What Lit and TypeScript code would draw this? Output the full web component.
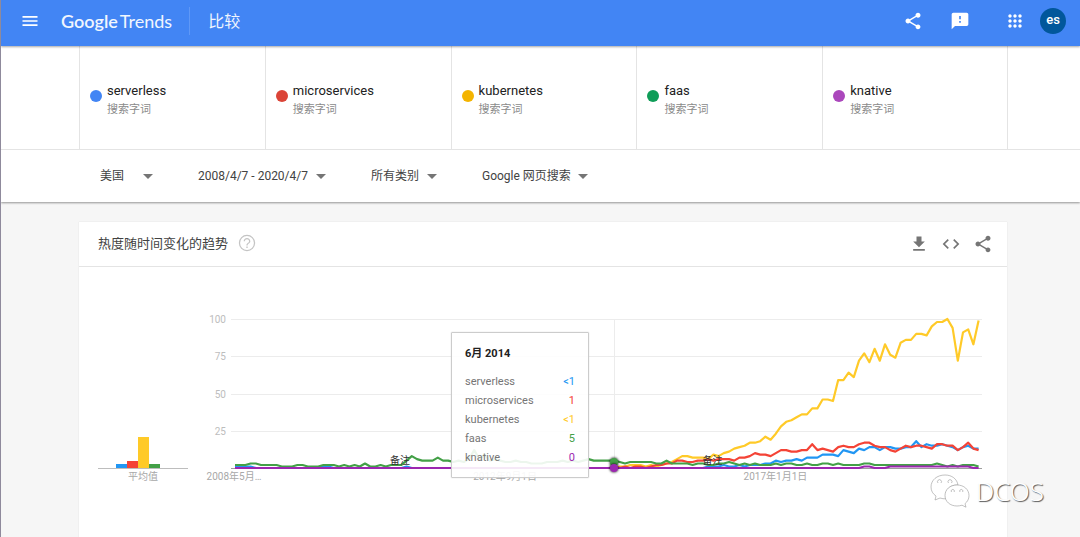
import { LitElement, html, svg, css } from "lit";
import { customElement, property } from "lit/decorators.js";

type Series = { id: string; color: string; values: number[] };

const parse = (text: string): number[] => text.trim().split(/\s+/).map(Number);
const zeros = (n: number): string => "0 ".repeat(n);

// Monthly interest from 2008 to 2020, one value per month.
const SERIES: Series[] = [
  {
    id: "kubernetes",
    color: "#ffca28",
    values: parse(
      zeros(74) +
        "1 1 2 2 2 1 2 1 2 3 4 6 8 8 7 7 7 6 9 8 10 11 13 14 15 17 17 18 21 19 23 28 31 32 34 36 36 40 40 46 46 45 " +
        "59 59 64 61 72 77 71 80 72 83 76 74 84 86 86 90 90 89 95 98 98 100 94 72 91 93 83 99",
    ),
  },
  {
    id: "serverless",
    color: "#2196f3",
    values: parse(
      "1 1 1 1 " + zeros(12) + "0 1 1 " + zeros(14) + "1 " + zeros(57) +
        "1 1 1 2 1 1 2 1 2 2 2 3 3 5 4 5 5 6 5 7 7 7 9 9 9 8 " +
        "12 11 10 13 12 14 14 12 14 14 13 13 14 14 18 14 16 15 15 16 15 14 12 14 15 13 13",
    ),
  },
  {
    id: "microservices",
    color: "#f44336",
    values: parse(
      zeros(73) +
        "1 0 1 0 1 1 0 1 2 2 3 3 5 5 4 4 5 5 6 5 6 6 6 5 7 7 8 10 9 9 8 10 12 12 11 11 12 12 16 12 13 12 11 14 " +
        "15 14 14 16 17 17 15 14 14 12 11 13 15 14 15 15 14 13 16 16 15 15 12 14 17 13 12",
    ),
  },
  {
    id: "faas",
    color: "#43a047",
    values: parse(
      "2 2 2 3 3 2 2 2 2 1 1 1 2 2 1 1 1 2 2 2 1 2 1 2 1 3 1 1 2 1 2 2 2 5 8 6 5 5 5 7 5 5 4 " +
        "5 4 6 12 6 9 5 6 5 4 4 5 4 4 3 3 3 4 4 4 5 4 5 4 5 6 5 5 5 5 5 4 3 4 4 4 4 4 3 3 5 3 3 3 3 2 3 3 2 2 3 " +
        "3 4 3 2 3 2 3 2 2 2 3 2 3 3 2 2 3 2 2 3 3 2 3 2 2 2 2 3 3 2 2 2 2 2 2 2 2 2 2 2 2 3 2 1 2 1 2 2 2 1",
    ),
  },
  {
    id: "knative",
    color: "#9c27b0",
    values: parse(zeros(121) + "1 1 0 0 0 1 1 1 1 1 1 1 1 1 1 1 1 1 1 1 1 0 0"),
  },
];

const TERMS = [
  { name: "serverless", color: "#4285f4" },
  { name: "microservices", color: "#db4437" },
  { name: "kubernetes", color: "#f4b400" },
  { name: "faas", color: "#0f9d58" },
  { name: "knative", color: "#ab47bc" },
];

const AVERAGES = [
  { value: 3, color: "#2196f3" },
  { value: 4.5, color: "#f44336" },
  { value: 21, color: "#ffca28" },
  { value: 3, color: "#43a047" },
  { value: 0, color: "#9c27b0" },
];

const READINGS = [
  { name: "serverless", value: "<1", color: "#2196f3" },
  { name: "microservices", value: "1", color: "#f44336" },
  { name: "kubernetes", value: "<1", color: "#ffca28" },
  { name: "faas", value: "5", color: "#43a047" },
  { name: "knative", value: "0", color: "#9c27b0" },
];

const ICONS: Record<string, string> = {
  menu: "M3 18h18v-2H3v2zm0-5h18v-2H3v2zm0-7v2h18V6H3z",
  share:
    "M18 16.08c-.76 0-1.44.3-1.96.77L8.91 12.7c.05-.23.09-.46.09-.7s-.04-.47-.09-.7l7.05-4.11c.54.5 1.25.81 2.04.81 1.66 0 3-1.34 3-3s-1.34-3-3-3-3 1.34-3 3c0 .24.04.47.09.7L8.04 9.81C7.5 9.31 6.79 9 6 9c-1.66 0-3 1.34-3 3s1.34 3 3 3c.79 0 1.5-.31 2.04-.81l7.12 4.16c-.05.21-.08.43-.08.65 0 1.61 1.31 2.92 2.92 2.92 1.61 0 2.92-1.31 2.92-2.92s-1.31-2.92-2.92-2.92z",
  feedback:
    "M20 2H4c-1.1 0-1.99.9-1.99 2L2 22l4-4h14c1.1 0 2-.9 2-2V4c0-1.1-.9-2-2-2zm-7 12h-2v-2h2v2zm0-4h-2V6h2v4z",
  apps:
    "M6 8c1.1 0 2-.9 2-2s-.9-2-2-2-2 .9-2 2 .9 2 2 2zm6 12c1.1 0 2-.9 2-2s-.9-2-2-2-2 .9-2 2 .9 2 2 2zm-6 0c1.1 0 2-.9 2-2s-.9-2-2-2-2 .9-2 2 .9 2 2 2zm0-6c1.1 0 2-.9 2-2s-.9-2-2-2-2 .9-2 2 .9 2 2 2zm6 0c1.1 0 2-.9 2-2s-.9-2-2-2-2 .9-2 2 .9 2 2 2zm4-8c0 1.1.9 2 2 2s2-.9 2-2-.9-2-2-2-2 .9-2 2zm-4 2c1.1 0 2-.9 2-2s-.9-2-2-2-2 .9-2 2 .9 2 2 2zm6 6c1.1 0 2-.9 2-2s-.9-2-2-2-2 .9-2 2 .9 2 2 2zm0 6c1.1 0 2-.9 2-2s-.9-2-2-2-2 .9-2 2 .9 2 2 2z",
  help:
    "M11.200 18h1.600v-1.800h-1.600V18zM12 2.200a9.800 9.800 0 1 0 0 19.600 9.800 9.800 0 0 0 0-19.600zm0 18.100a8.300 8.300 0 1 1 0-16.600 8.300 8.300 0 0 1 0 16.600zM12 6c-2.210 0-4 1.790-4 4h1.500c0-1.400 1.100-2.500 2.500-2.500s2.500 1.100 2.500 2.500c0 2-3.200 2.100-3.200 5h1.500c0-2.200 3.200-2.500 3.200-5 0-2.210-1.790-4-4-4z",
  download: "M19 9h-4V3H9v6H5l7 7 7-7zM5 18v2h14v-2H5z",
  code:
    "M9.4 16.6L4.800 12l4.600-4.600L8 6l-6 6 6 6 1.400-1.400zm5.200 0l4.600-4.600-4.600-4.600L16 6l6 6-6 6-1.400-1.400z",
};

@customElement("trends-icon")
class TrendsIcon extends LitElement {
  @property() name = "menu";

  static styles = css`
    :host {
      display: block;
      width: 20px;
      height: 20px;
    }
    .glyph {
      display: block;
      width: 100%;
      height: 100%;
      fill: currentColor;
    }
  `;

  render() {
    return html`<svg class="glyph" viewBox="0 0 24 24" aria-hidden="true"><path d=${ICONS[this.name]}></path></svg>`;
  }
}

@customElement("trends-header")
class TrendsHeader extends LitElement {
  static styles = css`
    :host {
      display: flex;
      align-items: center;
      box-sizing: border-box;
      height: 46px;
      padding: 0 14px 4px 19px;
      background: #4285f4;
      color: #fff;
      box-shadow: 0 1px 2px rgba(0, 0, 0, 0.35);
      position: relative;
    }
    .icon {
      border: 0;
      padding: 0;
      background: none;
      color: inherit;
    }
    .logo {
      display: flex;
      gap: 2px;
      margin-left: 21px;
      color: #f1f6fe;
      text-decoration: none;
      font: 18px/24px Lato, sans-serif;
    }
    .brand {
      font-weight: 600;
    }
    .title {
      margin: 0 auto 0 17px;
      padding: 2px 0 0 18px;
      border-left: 1px solid #5f98f7;
      color: #f1f6fe;
      font-size: 16px;
      font-weight: 400;
      line-height: 26px;
    }
    .actions {
      display: flex;
      align-items: center;
    }
    .feedback {
      margin-left: 27px;
    }
    .apps {
      margin-left: 35px;
    }
    .avatar {
      width: 26px;
      height: 26px;
      margin-left: 15px;
      padding: 0 0 2px;
      border: 0;
      border-radius: 50%;
      background: #01579b;
      color: #fff;
      font: 500 13px/24px Roboto, sans-serif;
    }
  `;

  render() {
    return html`
      <button class="icon" aria-label="菜单"><trends-icon name="menu"></trends-icon></button>
      <a class="logo" href="#"><span class="brand">Google</span><span>Trends</span></a>
      <h1 class="title">比较</h1>
      <div class="actions">
        <button class="icon" aria-label="分享"><trends-icon name="share"></trends-icon></button>
        <button class="icon feedback" aria-label="反馈"><trends-icon name="feedback"></trends-icon></button>
        <button class="icon apps" aria-label="应用"><trends-icon name="apps"></trends-icon></button>
        <button class="avatar">es</button>
      </div>
    `;
  }
}

@customElement("trends-query")
class TrendsQuery extends LitElement {
  static styles = css`
    :host {
      display: block;
      background: #fff;
      box-shadow: 0 1px 2px rgba(0, 0, 0, 0.4);
    }
    .terms {
      display: grid;
      grid-template-columns: repeat(5, 1fr);
      padding: 0 72px 0 78px;
      border-bottom: 1px solid #e4e4e4;
    }
    .term {
      display: flex;
      align-items: center;
      gap: 5px;
      height: 103px;
      box-sizing: border-box;
      padding: 0 10px 4px;
      border-left: 1px solid #e4e4e4;
    }
    .term:last-child {
      border-right: 1px solid #e4e4e4;
    }
    .dot {
      width: 12px;
      height: 12px;
      border-radius: 50%;
    }
    .text {
      padding-top: 8px;
      line-height: 19px;
    }
    .name {
      font-size: 13px;
      color: #212121;
    }
    .kind {
      font-size: 11px;
      color: #8a8a8a;
    }
    .filters {
      display: flex;
      gap: 45px;
      height: 52px;
      align-items: center;
      padding: 0 99px;
    }
    .filter {
      display: flex;
      align-items: center;
      gap: 7px;
    }
    .filter::after {
      content: "";
      border: 5px solid transparent;
      border-top-color: #757575;
      border-bottom: 0;
    }
    .choice {
      appearance: none;
      border: 0;
      padding: 0;
      background: none;
      color: #424242;
      font: inherit;
      font-size: 12px;
      line-height: 20px;
      min-width: 36px;
    }
  `;

  render() {
    const filters = [
      ["地区", "美国"],
      ["时间范围", "2008/4/7 - 2020/4/7"],
      ["类别", "所有类别"],
      ["搜索类型", "Google 网页搜索"],
    ];
    return html`
      <div class="terms">
        ${TERMS.map(
          (term) => html`
            <div class="term">
              <span class="dot" style="background:${term.color}"></span>
              <div class="text">
                <div class="name">${term.name}</div>
                <div class="kind">搜索字词</div>
              </div>
            </div>
          `,
        )}
      </div>
      <div class="filters">
        ${filters.map(
          ([label, value]) => html`
            <label class="filter"><select class="choice" aria-label=${label}><option>${value}</option></select></label>
          `,
        )}
      </div>
    `;
  }
}

const PLOT_WIDTH = 751;
const PLOT_HEIGHT = 149;
const STEP = 5.2;

@customElement("trends-chart")
class TrendsChart extends LitElement {
  static styles = css`
    :host {
      display: grid;
      grid-template-columns: 90px 33px 1fr;
      column-gap: 5px;
      padding: 52px 25px 48px 19px;
      font-size: 10px;
      line-height: 15px;
      color: #bdbdbd;
    }
    .bars {
      display: flex;
      align-items: flex-end;
      justify-content: center;
      height: 149px;
      border-bottom: 1px solid #bdbdbd;
    }
    .bar {
      width: 11px;
    }
    .caption {
      text-align: center;
      color: #a8a8a8;
    }
    .scale {
      display: flex;
      flex-direction: column;
      justify-content: space-between;
      height: 127px;
      margin-top: -7px;
      text-align: right;
    }
    .plot {
      position: relative;
      height: 150px;
    }
    .lines {
      display: block;
      width: 100%;
      height: 100%;
      overflow: visible;
    }
    .grid {
      stroke: #ececec;
      vector-effect: non-scaling-stroke;
    }
    .axis {
      stroke: #9e9e9e;
      vector-effect: non-scaling-stroke;
    }
    .series {
      fill: none;
      stroke-width: 2.2;
      stroke-linejoin: round;
      vector-effect: non-scaling-stroke;
    }
    .note {
      position: absolute;
      bottom: 1px;
      color: #333;
      transform: translateX(-50%);
    }
    .date {
      position: absolute;
      top: 150px;
      color: #a8a8a8;
      white-space: nowrap;
      transform: translateX(-50%);
    }
    .marker {
      position: absolute;
      left: 51%;
      width: 8px;
      height: 8px;
      margin: 0 0 -4px -4px;
      border-radius: 50%;
      box-shadow: 0 0 2px 1px rgba(0, 0, 0, 0.5);
    }
    .tooltip {
      position: absolute;
      top: 13px;
      right: calc(49% + 25px);
      box-sizing: border-box;
      width: 138px;
      padding: 11px 13px 10px;
      border: 1px solid #ccc;
      border-radius: 1px;
      box-shadow: 0 0 1px rgba(0, 0, 0, 0.3);
      background: rgba(255, 255, 255, 0.9);
      font-size: 11px;
      color: #757575;
    }
    .month {
      margin: 0 0 9px;
      font-size: 11px;
      font-weight: 700;
      line-height: 19px;
      color: #212121;
    }
    .reading {
      display: flex;
      justify-content: space-between;
      line-height: 19px;
    }
  `;

  private path(values: number[]) {
    return values.map((v, i) => `${(4 + i * STEP).toFixed(1)},${(PLOT_HEIGHT - v * 1.49).toFixed(1)}`).join(" ");
  }

  render() {
    return html`
      <div>
        <div class="bars">
          ${AVERAGES.map((a) => html`<span class="bar" style="height:${a.value}%;background:${a.color}"></span>`)}
        </div>
        <div class="caption">平均值</div>
      </div>
      <div class="scale"><span>100</span><span>75</span><span>50</span><span>25</span></div>
      <div class="plot">
        <span class="note" style="left:22.5%">备注</span>
        <span class="note" style="left:64.1%">备注</span>
        <svg class="lines" viewBox="0 0 ${PLOT_WIDTH} 150" preserveAspectRatio="none" role="img" aria-label="热度随时间变化的趋势">
          ${[0, 37, 75, 112].map((y) => svg`<line class="grid" x1="0" x2=${PLOT_WIDTH} y1=${y + 0.5} y2=${y + 0.5}></line>`)}
          <line class="grid" x1="383.5" x2="383.5" y1="0" y2="149"></line>
          <line class="axis" x1="0" x2=${PLOT_WIDTH} y1="149.5" y2="149.5"></line>
          ${SERIES.map((s) => svg`<polyline class="series" stroke=${s.color} points=${this.path(s.values)}></polyline>`)}
        </svg>
        <span class="date" style="left:0.4%">2008年5月…</span>
        <span class="date" style="left:36.5%">2012年9月1日</span>
        <span class="date" style="left:72.5%">2017年1月1日</span>
        <span class="marker" style="bottom:5%;background:#43a047"></span>
        <span class="marker" style="bottom:1%;background:#9c27b0"></span>
        <div class="tooltip">
          <h3 class="month">6月 2014</h3>
          ${READINGS.map(
            (r) => html`<div class="reading"><span>${r.name}</span><span style="color:${r.color}">${r.value}</span></div>`,
          )}
        </div>
      </div>
    `;
  }
}

@customElement("app-root")
class AppRoot extends LitElement {
  static styles = css`
    :host {
      display: block;
      box-sizing: border-box;
      min-height: 100vh;
      position: relative;
      overflow: hidden;
      border-left: 1px solid #8f8a9c;
      background: #f6f6f6;
      font-family: Roboto, "Noto Sans CJK SC", sans-serif;
    }
    .card {
      margin: 20px 73px 0 78px;
      min-height: calc(100vh - 222px);
      background: #fff;
      box-shadow: 0 0 1px rgba(0, 0, 0, 0.15);
    }
    .bar {
      display: flex;
      align-items: center;
      height: 44px;
      padding: 0 14px 0 19px;
      border-bottom: 1px solid #e4e4e4;
      color: #757575;
    }
    .heading {
      margin: 0;
      color: #424242;
      font-size: 13px;
      font-weight: 400;
      line-height: 20px;
    }
    .icon {
      border: 0;
      padding: 0;
      background: none;
      color: inherit;
    }
    .help {
      margin: 0 auto 2px 9px;
      color: #c4c4c4;
    }
    .tools {
      display: flex;
      gap: 12px;
    }
    .watermark {
      position: absolute;
      right: 36px;
      bottom: 26px;
      display: flex;
      align-items: center;
      gap: 6px;
      color: #fff;
      font: 300 26px/40px "Noto Sans", sans-serif;
      text-shadow: 1px 1px 1px #555;
    }
    .wechat {
      width: 40px;
      height: 34px;
      fill: #fff;
      stroke: #999;
      stroke-width: 0.6;
    }
  `;

  render() {
    return html`
      <trends-header></trends-header>
      <trends-query></trends-query>
      <section class="card">
        <div class="bar">
          <h2 class="heading">热度随时间变化的趋势</h2>
          <button class="icon help" aria-label="帮助"><trends-icon name="help"></trends-icon></button>
          <div class="tools">
            <button class="icon" aria-label="下载"><trends-icon name="download"></trends-icon></button>
            <button class="icon" aria-label="嵌入"><trends-icon name="code"></trends-icon></button>
            <button class="icon" aria-label="分享"><trends-icon name="share"></trends-icon></button>
          </div>
        </div>
        <trends-chart></trends-chart>
      </section>
      <div class="watermark">
        <svg class="wechat" viewBox="0 0 40 34" aria-hidden="true">
          <path d="M15 1C7 1 1 6 1 13c0 4 2 7 5 9l-1 4 5-2c2 .6 4 1 6 .8C14 16 20 10.500 28 11 27 5 22 1 15 1z"></path>
          <path d="M27 11c-7 0-12 4.500-12 10.500S20 32 27 32c1.700 0 3.300-.3 5-.8l4 2-1-3.500c2.500-2 4-4.900 4-8C39 15.500 34 11 27 11z"></path>
          <path fill="none" d="M8 9a2 2 0 1 1 3 0M18.500 9a2 2 0 1 1 3 0M21.500 18a1.600 1.600 0 1 1 2.600 0M30 18a1.600 1.600 0 1 1 2.600 0"></path>
        </svg>
        <span>DCOS</span>
      </div>
    `;
  }
}
